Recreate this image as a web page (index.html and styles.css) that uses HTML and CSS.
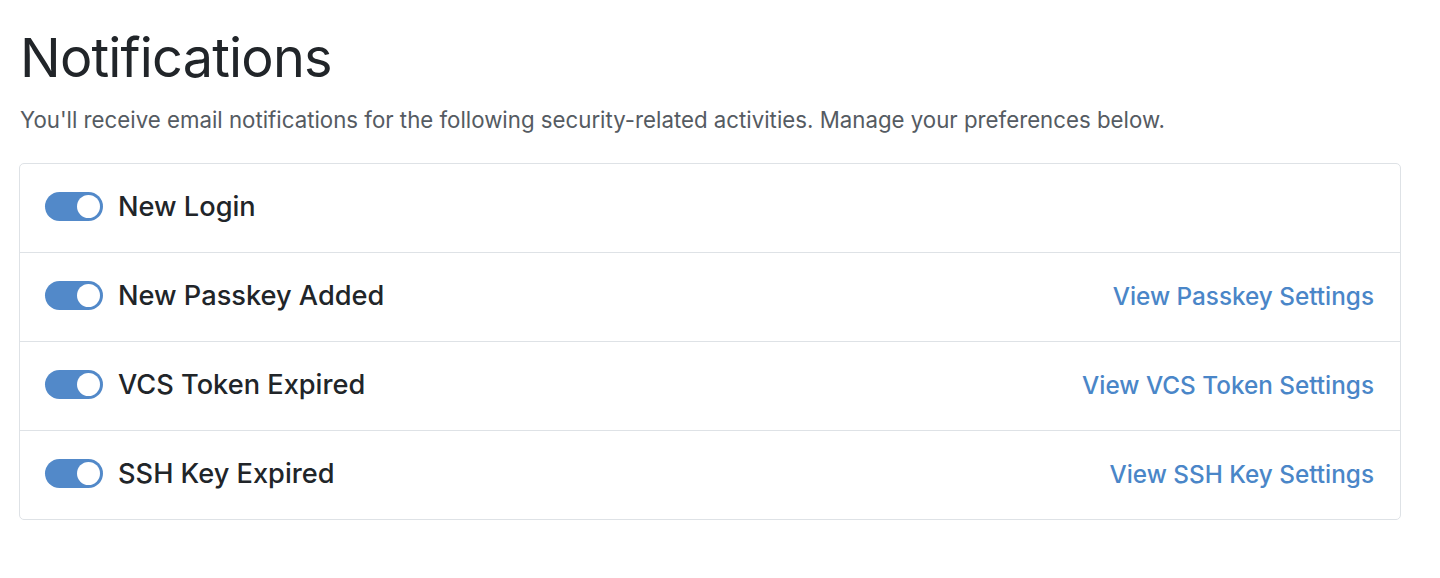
FILE: index.html
```html
<!DOCTYPE html>
<html>
<head>
<meta charset="utf-8">
<link rel="stylesheet" href="styles.css">
</head>
<body>
<main class="page">
  <h1 class="title">Notifications</h1>
  <p class="lead">You'll receive email notifications for the following security-related activities. Manage your preferences below.</p>
  <ul class="list">
    <li class="row">
      <label class="item"><span class="switch"><span class="knob"></span></span><span class="label">New Login</span></label>
    </li>
    <li class="row">
      <label class="item"><span class="switch"><span class="knob"></span></span><span class="label">New Passkey Added</span></label>
      <a class="link" href="#">View Passkey Settings</a>
    </li>
    <li class="row">
      <label class="item"><span class="switch"><span class="knob"></span></span><span class="label">VCS Token Expired</span></label>
      <a class="link" href="#">View VCS Token Settings</a>
    </li>
    <li class="row">
      <label class="item"><span class="switch"><span class="knob"></span></span><span class="label">SSH Key Expired</span></label>
      <a class="link" href="#">View SSH Key Settings</a>
    </li>
  </ul>
</main>
</body>
</html>
```

FILE: styles.css
```css
* { box-sizing: border-box; }
body {
  margin: 0;
  background: #fff;
  font-family: Inter, "Liberation Sans", sans-serif;
  color: #212529;
}
.page {
  padding: 24px 39px 0 19px;
}
.title {
  margin: 0 0 11px 1px;
  font-size: 54px;
  font-weight: 400;
  line-height: 68px;
  letter-spacing: -0.8px;
}
.lead {
  margin: 0 0 27px 1px;
  font-size: 22.25px;
  line-height: 33px;
  color: #555b62;
}
.list {
  list-style: none;
  margin: 0;
  padding: 0;
  border: 1px solid #dee2e6;
  border-radius: 5px;
}
.row {
  display: flex;
  align-items: center;
  justify-content: space-between;
  height: 89px;
  padding: 0 26px 3px 25px;
  border-top: 1px solid #dee2e6;
}
.row:first-child { border-top: none; height: 88px; }
.item {
  display: flex;
  align-items: center;
  gap: 15px;
}
.switch {
  width: 58px;
  height: 29px;
  border-radius: 15px;
  background: #5289c9;
  display: flex;
  align-items: center;
  justify-content: flex-end;
  padding-right: 3px;
}
.knob {
  width: 23px;
  height: 23px;
  border-radius: 50%;
  background: #fff;
}
.label {
  font-size: 27.2px;
  line-height: 36px;
  font-weight: 450;
}
.link {
  color: #4a86c8;
  text-decoration: none;
  font-size: 24.3px;
  line-height: 32px;
  font-weight: 450;
}
```
